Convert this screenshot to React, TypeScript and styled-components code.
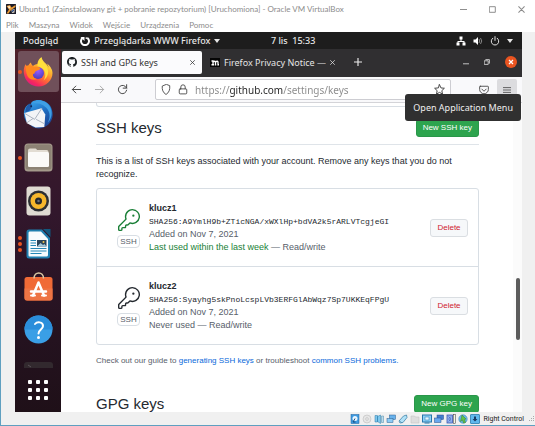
import React from "react";
import styled, { createGlobalStyle, css } from "styled-components";

const ui = '"Noto Sans", "Open Sans", sans-serif';
const host = 'Lato, "Open Sans", sans-serif';
const web = '"Liberation Sans", Arial, sans-serif';

const GlobalStyle = createGlobalStyle`
  *, *::before, *::after { box-sizing: border-box; }
  body { margin: 0; background: #f0f0f0; }
  button, input { font: inherit; color: inherit; margin: 0; padding: 0; border: 0; background: none; }
  svg { display: block; flex: none; }
`;

const HostWindow = styled.div`
  display: flex;
  flex-direction: column;
  height: 100vh;
  overflow: hidden;
  background: #f0f0f0;
  border-left: 1px solid #5f9fc0;
  border-bottom: 1px solid #5f9fc0;
  font-family: ${host};
`;

const TitleBar = styled.header`
  display: flex;
  align-items: center;
  gap: 3px;
  height: 18px;
  padding: 0 10px 0 5px;
  background: #fff;
  color: #8c8c8c;
  font-size: 8px;
`;

const WindowTitle = styled.h1`
  flex: 1;
  margin: 0;
  font-size: 8px;
  font-weight: 400;
  white-space: nowrap;
`;

const HostControls = styled.div`
  display: flex;
  gap: 22px;
`;

const IconButton = styled.button`
  display: flex;
  align-items: center;
  justify-content: center;
`;

const MenuBar = styled.nav`
  display: flex;
  align-items: center;
  gap: 10px;
  height: 14px;
  padding: 0 5px;
  background: #fff;
  color: #8c8c8c;
  font-size: 8px;
`;

const Guest = styled.main`
  flex: 1;
  min-height: 0;
  display: flex;
  flex-direction: column;
  margin: 0 13px 0 14px;
  background: #1d1d1d;
  font-family: ${ui};
`;

const TopPanel = styled.div`
  display: grid;
  grid-template-columns: 6fr auto 5fr;
  align-items: center;
  height: 17px;
  flex: none;
  padding-left: 8px;
  color: #e6e6e6;
  font-size: 9px;
  font-weight: 500;
  white-space: nowrap;
`;

const PanelLeft = styled.div`
  display: flex;
  align-items: center;
  gap: 22px;
`;

const AppMenu = styled.button`
  display: flex;
  align-items: center;
  gap: 4px;
`;

const PanelTray = styled.div`
  display: flex;
  align-items: center;
  justify-content: flex-end;
  gap: 7px;
  padding-right: 9px;
`;

const Desktop = styled.div`
  flex: 1;
  min-height: 0;
  display: flex;
`;

const Dock = styled.nav`
  display: flex;
  flex-direction: column;
  align-items: center;
  width: 46px;
  flex: none;
  padding-top: 2px;
  overflow: hidden;
  background: linear-gradient(#4e2029, #3a1a2c 22%, #32172c 45%, #24121f 80%, #1f1018);
`;

const DockItem = styled.button<{ $active?: boolean }>`
  position: relative;
  display: flex;
  align-items: center;
  justify-content: center;
  width: 41px;
  height: 41px;
  flex: none;
  margin-bottom: 2px;
  border-radius: 3px;
  ${(p) => p.$active && css`background: #70505a;`}
`;

const RunningDots = styled.span`
  position: absolute;
  left: 0;
  display: flex;
  flex-direction: column;
  gap: 2px;
`;

const Dot = styled.i`
  width: 4px;
  height: 4px;
  border-radius: 50%;
  background: #e95420;
`;

const TerminalEdge = styled.button`
  display: flex;
  height: 6px;
  flex: none;
  margin-top: 10px;
`;

const AppsButton = styled.button`
  display: flex;
  margin-top: 12px;
`;

const Browser = styled.section`
  position: relative;
  flex: 1;
  min-width: 0;
  display: flex;
  flex-direction: column;
  background: #fff;
`;

const TabStrip = styled.div`
  display: flex;
  align-items: center;
  height: 28px;
  flex: none;
  padding: 0 5px 2px 1px;
  background: #302f31;
`;

const Tab = styled.div<{ $active?: boolean }>`
  display: flex;
  align-items: center;
  gap: 4px;
  width: 140px;
  height: 23px;
  padding: 0 7px 0 5px;
  border-radius: 2px;
  background: ${(p) => (p.$active ? "#fbfbfd" : "transparent")};
  color: ${(p) => (p.$active ? "#333" : "#e4e4e4")};
  font-size: 9px;
  white-space: nowrap;
  & + & { padding-left: 8px; }
`;

const TabLabel = styled.button`
  flex: 1;
  min-width: 0;
  overflow: hidden;
  text-align: left;
`;

const NewTab = styled(IconButton)`
  margin: 0 auto 0 12px;
`;

const BrowserControls = styled.div`
  display: flex;
  align-items: center;
  gap: 15px;
`;

const Toolbar = styled.div`
  display: flex;
  align-items: center;
  height: 26px;
  flex: none;
  padding: 0 5px 0 10px;
  background: #f9f9fb;
  border-bottom: 1px solid #d4d4d8;
  color: #444;
`;

const NavButtons = styled.div`
  display: flex;
  align-items: center;
  gap: 12px;
  margin-right: 27px;
`;

const AddressBar = styled.label`
  flex: 1;
  min-width: 0;
  display: flex;
  align-items: center;
  gap: 7px;
  height: 21px;
  padding: 0 5px;
  border: 1px solid #cdcdd2;
  border-radius: 2px;
  background: #fff;
`;

const AddressInput = styled.input`
  flex: 1;
  min-width: 0;
  font-size: 10px;
  outline: none;
  background: linear-gradient(90deg, #888 34px, #222 34px, #222 88px, #888 88px);
  -webkit-background-clip: text;
  background-clip: text;
  color: transparent;
`;

const ToolbarEnd = styled.div`
  display: flex;
  align-items: center;
  gap: 8px;
  margin-left: 28px;
`;

const MenuButton = styled(IconButton)`
  width: 20px;
  height: 21px;
  border-radius: 2px;
  background: #dcdcdf;
`;

const Tooltip = styled.div`
  position: absolute;
  top: 45px;
  right: 1px;
  padding: 6px 8px;
  border-radius: 3px;
  background: #303030;
  color: #eee;
  font-size: 9px;
  line-height: 15px;
  white-space: nowrap;
`;

const Viewport = styled.div`
  flex: 1;
  min-height: 0;
  display: flex;
  overflow: hidden;
  font-family: ${web};
  color: #24292f;
`;

const Page = styled.div`
  flex: 1;
  min-width: 0;
  padding: 0 34px 0 35px;
`;

const ScrollTrack = styled.div`
  width: 9px;
  flex: none;
  padding: 175px 2px 0 3px;
  background: #fbfbfb;
`;

const ScrollThumb = styled.div`
  height: 62px;
  border-radius: 2px;
  background: #5c5c5c;
`;

const PreviousPanel = styled.div`
  height: 4px;
  border: 1px solid #d8dee4;
  border-top: 0;
  border-radius: 0 0 3px 3px;
`;

const SectionHead = styled.div<{ $top: number }>`
  display: flex;
  align-items: center;
  justify-content: space-between;
  margin-top: ${(p) => p.$top}px;
  padding-bottom: 7px;
  border-bottom: 1px solid #dfe4e9;
`;

const SectionTitle = styled.h2`
  margin: 0;
  font-size: 15px;
  line-height: 18px;
  font-weight: 400;
`;

const PrimaryButton = styled.button`
  height: 18px;
  padding: 0 6px;
  border: 1px solid #2a964a;
  border-radius: 3px;
  background: #2da44e;
  color: #fff;
  font-size: 8px;
  line-height: 14px;
  white-space: nowrap;
`;

const Intro = styled.p`
  margin: 10px 0 7px;
  font-size: 9px;
  line-height: 13px;
`;

const KeyList = styled.ul`
  list-style: none;
  margin: 0;
  padding: 0;
  border: 1px solid #d8dee4;
  border-radius: 3px;
`;

const KeyRow = styled.li`
  display: flex;
  align-items: center;
  gap: 9px;
  padding: 13px 10px 12px 20px;
  & + & { border-top: 1px solid #d8dee4; }
`;

const KeyMark = styled.div<{ $recent: boolean }>`
  display: flex;
  flex-direction: column;
  align-items: center;
  gap: 4px;
  width: 23px;
  color: ${(p) => (p.$recent ? "#1a7f37" : "#24292f")};
`;

const Badge = styled.span`
  width: 100%;
  border: 1px solid #d8dee4;
  border-radius: 4px;
  color: #57606a;
  font-size: 8px;
  line-height: 11px;
  text-align: center;
`;

const KeyInfo = styled.div`
  flex: 1;
  min-width: 0;
  color: #57606a;
  font-size: 9px;
  line-height: 13px;
  white-space: nowrap;
`;

const KeyName = styled.strong`
  display: block;
  color: #24292f;
`;

const Fingerprint = styled.code`
  display: block;
  color: #24292f;
  font-family: "Liberation Mono", monospace;
  font-size: 8px;
`;

const Recent = styled.span`
  color: #1a7f37;
`;

const DeleteButton = styled.button`
  width: 38px;
  height: 18px;
  border: 1px solid #dadee2;
  border-radius: 3px;
  background: #f6f8fa;
  color: #cf222e;
  font-size: 8px;
  line-height: 14px;
`;

const Help = styled.p`
  margin: 10px 0 0;
  color: #57606a;
  font-size: 8px;
  line-height: 12px;
`;

const Link = styled.a`
  color: #0969da;
  text-decoration: none;
`;

const StatusBar = styled.footer`
  display: flex;
  align-items: center;
  justify-content: flex-end;
  gap: 2px;
  height: 13px;
  flex: none;
  color: #222;
  font-family: Roboto, sans-serif;
  font-size: 7px;
  white-space: nowrap;
`;

const StatusLabel = styled.span`
  margin: 0 3px 0 1px;
`;

const Line = ({ w = 10, h = w, box = "0 0 16 16", sw = 1.4, children }: any) => (
  <svg width={w} height={h} viewBox={box} fill="none" stroke="currentColor" strokeWidth={sw} strokeLinecap="round" strokeLinejoin="round" aria-hidden="true">
    {children}
  </svg>
);

const VBoxIcon = () => (
  <svg width="10" height="10" viewBox="0 0 20 20" aria-hidden="true">
    <rect width="20" height="20" rx="1" fill="#1c1d2b" />
    <path d="M1 4 8 2l3 5 8-5v4L9 13l-4 6H1l5-8z" fill="#e99a35" />
    <path d="M3 5l4-1 2 4-3 1zM11 12l6-2v7l-5 1z" fill="#f7ead1" />
    <path d="M12 13l4-2v3l-4 3z" fill="#2a4a86" />
  </svg>
);

const FirefoxIcon = () => (
  <svg width="30" height="30" viewBox="0 0 60 60" aria-hidden="true">
    <defs>
      <linearGradient id="ff" x1="0.8" y1="0.05" x2="0.25" y2="1">
        <stop offset="0" stopColor="#fff44f" />
        <stop offset="0.35" stopColor="#ffb02e" />
        <stop offset="0.6" stopColor="#ff6a35" />
        <stop offset="0.85" stopColor="#f5265f" />
        <stop offset="1" stopColor="#d91a8a" />
      </linearGradient>
      <radialGradient id="ffg" cx="0.5" cy="0.3" r="0.8">
        <stop offset="0" stopColor="#9b5cff" />
        <stop offset="1" stopColor="#3f3bb5" />
      </radialGradient>
    </defs>
    <path d="M57 24c-2-5-6-9-9-11 2 4 3 6 3 8C48 13 38 9 37 0c-6 4-8 10-8 14-4 0-7 2-9 4-1-1-4-3-4-7-3 2-5 5-6 8-3-1-5-3-5-5-4 8-4 15-3 20 2 14 14 25 29 25s28-12 28-27c0-3-1-6-2-8z" fill="url(#ff)" />
    <circle cx="30" cy="32" r="12" fill="url(#ffg)" />
    <path d="M6 18c6-3 12-1 16 2 4-1 8-1 11 1 2 2 1 4-1 5-3 1-6 1-8 4-1 2-1 4-4 4-1 5 3 10 9 10-9 4-17 0-20-6-3-7-4-14-3-20z" fill="#ff8a1f" />
    <path d="M37 2c1 9 10 13 12 21 3 9 0 18-8 24 4-6 5-13 2-19-2-5-8-8-14-10 0-6 2-12 8-16z" fill="#ffdf3c" />
  </svg>
);

const ThunderbirdIcon = () => (
  <svg width="31" height="31" viewBox="0 0 64 64" aria-hidden="true">
    <defs>
      <linearGradient id="tb" x1="0.3" y1="0" x2="0.8" y2="1">
        <stop offset="0" stopColor="#3aa6ee" />
        <stop offset="0.5" stopColor="#1c69bd" />
        <stop offset="1" stopColor="#1d3f8f" />
      </linearGradient>
    </defs>
    <path d="M18 6C30-2 48 2 56 14c8 13 7 30-4 39-9 8-22 10-32 5L6 46C1 36 0 25 6 16l4-4 4 3z" fill="url(#tb)" />
    <path d="M20 8c10 0 20 1 28 10 8 8 9 20 3 31 9-9 11-23 4-34C48 4 32-1 20 8z" fill="#3f9fe4" />
    <path d="M3 29 38 19l8 13-2 26-18 1-18-9z" fill="#f2f4f7" />
    <path d="m4 30 20 12 15-23M8 49l13-9M44 51l-17-9" fill="none" stroke="#a9b3c0" strokeWidth="2" />
    <path d="M12 10c-5 5-8 11-7 18l8-4c5-4 6-10 4-14z" fill="#1f5ba8" />
    <circle cx="17" cy="15" r="2" fill="#0d2856" />
  </svg>
);

const FilesIcon = () => (
  <svg width="29" height="29" viewBox="0 0 58 58" aria-hidden="true">
    <rect x="1" y="1" width="56" height="56" rx="7" fill="#a49a8b" />
    <rect x="3" y="3" width="52" height="50" rx="5" fill="#8c8274" />
    <path d="M8 15q0-4 4-4h11q2 0 3 3h19q4 0 4 4v26q0 4-4 4H12q-4 0-4-4z" fill="#e2dcd2" />
    <rect x="8" y="18" width="42" height="30" rx="3" fill="#fbfaf8" />
  </svg>
);

const MusicIcon = () => (
  <svg width="25" height="30" viewBox="0 0 50 60" aria-hidden="true">
    <rect x="1" y="1" width="48" height="58" rx="6" fill="#dfdbd2" />
    <circle cx="25" cy="30" r="21" fill="#2c2f33" />
    <circle cx="25" cy="30" r="16" fill="#f6b72c" />
    <circle cx="25" cy="30" r="7" fill="#25282b" />
    <circle cx="25" cy="30" r="2.5" fill="#697078" />
  </svg>
);

const WriterIcon = () => (
  <svg width="25" height="30" viewBox="0 0 50 60" aria-hidden="true">
    <path d="M6 1h26l16 17v36q0 5-5 5H6q-5 0-5-5V6q0-5 5-5z" fill="#1f7eae" />
    <path d="M34 0h15v16z" fill="#13577d" />
    <path d="M7 5h23l14 15v32q0 3-3 3H7q-2 0-2-3V8q0-3 2-3z" fill="#f7fbfd" />
    <path d="M9 23h11M9 28h11M9 33h11M9 39h32M9 44h32M9 49h22" stroke="#2587b5" strokeWidth="2.4" />
    <rect x="22" y="22" width="19" height="13" fill="#2a4459" />
    <path d="m22 35 7-7 5 4 3-2 4 5z" fill="#9fc7da" />
    <circle cx="35" cy="26" r="2" fill="#f3c64b" />
  </svg>
);

const SoftwareIcon = () => (
  <svg width="29" height="29" viewBox="0 0 58 58" aria-hidden="true">
    <rect x="1" y="10" width="56" height="47" rx="5" fill="#f06a36" />
    <path d="M1 33h56v19q0 5-5 5H6q-5 0-5-5z" fill="#ee7444" />
    <path d="M20 13c0-15 19-15 19 0" fill="none" stroke="#d8c7a3" strokeWidth="3" />
    <path d="m18 47 11-26 11 26M14 39h30" fill="none" stroke="#fff" strokeWidth="5" strokeLinecap="round" strokeLinejoin="round" />
    <path d="M14 47h8M36 47h8" fill="none" stroke="#fff" strokeWidth="4" strokeLinecap="round" />
  </svg>
);

const HelpIcon = () => (
  <svg width="29" height="29" viewBox="0 0 58 58" aria-hidden="true">
    <circle cx="29" cy="29" r="28" fill="#3a9fe6" />
    <path d="M1 29a28 28 0 0 1 56 0z" fill="#2b8edb" />
    <path d="M22 18c4-5 16-5 16 4 0 7-9 7-9 15" fill="none" stroke="#fff" strokeWidth="4" strokeLinecap="round" />
    <circle cx="29" cy="45" r="3" fill="#fff" />
  </svg>
);

const KeyIcon = () => (
  <svg width="22" height="22" viewBox="0 0 24 24" fill="currentColor" aria-hidden="true">
    <path d="M16.75 8.5a1.25 1.25 0 1 0 0-2.5 1.25 1.25 0 0 0 0 2.5Z" />
    <path d="M15.75 0a8.25 8.25 0 0 0-7.851 10.79L.513 18.178A1.75 1.75 0 0 0 0 19.414v2.836C0 23.217.784 24 1.75 24h1.5A1.75 1.75 0 0 0 5 22.25v-1a.25.25 0 0 1 .25-.25h2.735a.75.75 0 0 0 .545-.22l.214-.213A.875.875 0 0 0 9 19.948V18.5a.25.25 0 0 1 .25-.25h1.086c.464 0 .91-.184 1.237-.513l1.636-1.636A8.25 8.25 0 1 0 15.75 0ZM9 8.25a6.75 6.75 0 1 1 4.288 6.287.75.75 0 0 0-.804.168l-1.971 1.972a.25.25 0 0 1-.177.073H9.25A1.75 1.75 0 0 0 7.5 18.5v1H5.25a1.75 1.75 0 0 0-1.75 1.75v1a.25.25 0 0 1-.25.25h-1.5a.25.25 0 0 1-.25-.25v-2.836a.25.25 0 0 1 .073-.177l7.722-7.721a.75.75 0 0 0 .168-.804A6.73 6.73 0 0 1 9 8.25Z" />
  </svg>
);

const GithubIcon = () => (
  <svg width="10" height="10" viewBox="0 0 16 16" fill="#1b1f23" aria-hidden="true">
    <path d="M8 0C3.58 0 0 3.58 0 8c0 3.54 2.29 6.53 5.47 7.59.4.07.55-.17.55-.38 0-.19-.01-.82-.01-1.49-2.01.37-2.53-.49-2.69-.94-.09-.23-.48-.94-.82-1.13-.28-.15-.68-.52-.01-.53.63-.01 1.08.58 1.23.82.72 1.21 1.87.87 2.33.66.07-.52.28-.87.51-1.07-1.78-.2-3.64-.89-3.64-3.95 0-.87.31-1.59.82-2.15-.08-.2-.36-1.02.08-2.12 0 0 .67-.21 2.2.82.64-.18 1.32-.27 2-.27s1.36.09 2 .27c1.53-1.04 2.2-.82 2.2-.82.44 1.1.16 1.92.08 2.12.51.56.82 1.27.82 2.15 0 3.07-1.87 3.75-3.65 3.95.29.25.54.73.54 1.48 0 1.07-.01 1.93-.01 2.2 0 .21.15.46.55.38A8.01 8.01 0 0 0 16 8c0-4.42-3.58-8-8-8z" />
  </svg>
);

const MozillaIcon = () => (
  <svg width="10" height="9" viewBox="0 0 20 18" aria-hidden="true">
    <rect width="20" height="18" fill="#050505" />
    <path d="M3 6h3v7M3 13.500h5M6 8q4-3 5 0v5M9.500 13.500h3M11 8q4-3 5 0v5.500h2" fill="none" stroke="#fff" strokeWidth="2.600" />
  </svg>
);

const Caret = () => (
  <svg width="6" height="4" viewBox="0 0 6 4" fill="currentColor" aria-hidden="true"><path d="M0 0h6L3 4z" /></svg>
);

const Cross = ({ size = 6 }: { size?: number }) => (
  <Line w={size} box="0 0 10 10" sw={1.5}><path d="m1 1 8 8M9 1 1 9" /></Line>
);

const statusIcons: { name: string; art: React.ReactNode }[] = [
  { name: "Hard disk", art: <><rect x="2" y="1" width="16" height="18" fill="#3f9be0" stroke="#1b5f9f" /><circle cx="10" cy="9" r="5" fill="#e8f5ff" /><path d="m10 9-4 7h5" fill="none" stroke="#174b7c" strokeWidth="2" /></> },
  { name: "Optical disc", art: <><circle cx="10" cy="10" r="8" fill="#e6e6e6" stroke="#b5b5b5" /><circle cx="10" cy="10" r="2.5" fill="#fff" stroke="#999" /></> },
  { name: "Audio", art: <><path d="M2 3h5v13H2zM7 5l6-3v17l-6-4z" fill="#7fc8ee" stroke="#2a7ba8" /><path d="M15 4h4v13h-4z" fill="#b6dcef" stroke="#4e88a6" /></> },
  { name: "Network", art: <><rect x="7" y="2" width="12" height="9" fill="#68b2ec" stroke="#295d8e" /><rect x="2" y="9" width="12" height="8" fill="#8ccbf5" stroke="#295d8e" /></> },
  { name: "USB", art: <><path d="m2 14 9-10 6-2 1 5-8 10-6 1z" fill="#b1e2f8" stroke="#397fa5" strokeWidth="1.500" /><path d="m3 13 5 5" stroke="#397fa5" /></> },
  { name: "Shared folders", art: <path d="M2 4h7l2 2h7v12H2z" fill="#dedede" stroke="#bdbdbd" /> },
  { name: "Display", art: <><rect x="1" y="2" width="18" height="14" fill="#8ed2f8" stroke="#2776aa" strokeWidth="2" /><rect x="6" y="6" width="8" height="6" fill="#e3f6ff" stroke="#2776aa" /><path d="M5 18h10" stroke="#2776aa" strokeWidth="2" /></> },
  { name: "Recording", art: <><rect x="6" y="2" width="13" height="9" fill="#447ed0" stroke="#244d8a" /><rect x="1" y="8" width="13" height="9" fill="#69a8ee" stroke="#244d8a" /></> },
  { name: "Processor", art: <><rect x="2" y="2" width="11" height="16" fill="#91b3ef" stroke="#344eac" strokeWidth="1.500" /><path d="m5 5 5 5-5 5m5-10-5 5 5 5" fill="none" stroke="#344eac" /><rect x="15" y="1" width="4" height="18" fill="#f5f5e6" stroke="#333" /></> },
  { name: "Mouse integration", art: <><circle cx="10" cy="10" r="8.500" fill="#69b9e8" stroke="#3481ae" /><path d="m8 2 8 8-3 1 2 6-4 1-2-6-4 3z" fill="#62c248" stroke="#397f2a" /></> },
  { name: "Keyboard capture", art: <><rect x="1" y="1" width="18" height="18" rx="1" fill="#5fb8ee" stroke="#2477a9" strokeWidth="1.500" /><path d="M8 5h4v5h3l-5 5-5-5h3z" fill="#183b63" /></> },
];

const keys = [
  { name: "klucz1", hash: "SHA256:A9YmlH9b+ZTicNGA/xWXlHp+bdVA2k5rARLVTcgjeGI", used: "Last used within the last week", recent: true },
  { name: "klucz2", hash: "SHA256:Syayhg5skPnoLcspLVb3ERFGlAbWqz7Sp7UKKEqFPgU", used: "Never used", recent: false },
];

const dockApps = [
  { name: "Firefox", icon: <FirefoxIcon />, dots: 1, active: true },
  { name: "Thunderbird", icon: <ThunderbirdIcon />, dots: 0 },
  { name: "Files", icon: <FilesIcon />, dots: 1 },
  { name: "Rhythmbox", icon: <MusicIcon />, dots: 0 },
  { name: "LibreOffice Writer", icon: <WriterIcon />, dots: 3 },
  { name: "Ubuntu Software", icon: <SoftwareIcon />, dots: 0 },
  { name: "Help", icon: <HelpIcon />, dots: 0 },
];

export default function App() {
  return (
    <>
      <GlobalStyle />
      <HostWindow>
        <TitleBar>
          <VBoxIcon />
          <WindowTitle>Ubuntu1 (Zainstalowany git + pobranie repozytorium) [Uruchomiona] - Oracle VM VirtualBox</WindowTitle>
          <HostControls>
            <IconButton aria-label="Minimize"><Line w={7} box="0 0 10 10"><path d="M0 5h10" /></Line></IconButton>
            <IconButton aria-label="Maximize"><Line w={7} box="0 0 10 10"><path d="M1 1h8v8H1z" /></Line></IconButton>
            <IconButton aria-label="Close"><Cross size={7} /></IconButton>
          </HostControls>
        </TitleBar>
        <MenuBar>
          {["Plik", "Maszyna", "Widok", "Wejście", "Urządzenia", "Pomoc"].map((m) => <button key={m}>{m}</button>)}
        </MenuBar>

        <Guest>
          <TopPanel>
            <PanelLeft>
              <button>Podgląd</button>
              <AppMenu>
                <svg width="10" height="10" viewBox="0 0 20 20" aria-hidden="true">
                  <path d="M5 4a8 8 0 1 0 10 0" fill="none" stroke="#fff" strokeWidth="4" />
                  <path d="M1 2h8v8zM10 4l5-2v5z" fill="#fff" />
                </svg>
                Przeglądarka WWW Firefox
                <Caret />
              </AppMenu>
            </PanelLeft>
            <button>7 lis&nbsp; 15:33</button>
            <PanelTray>
              <svg width="10" height="10" viewBox="0 0 20 20" fill="#fff" aria-hidden="true"><path d="M7 1h6v6h-2v3h6v3h2v6h-6v-6h2v-1H5v1h2v6H1v-6h2v-3h6V7H7z" /></svg>
              <svg width="10" height="10" viewBox="0 0 20 20" aria-hidden="true"><path d="M1 7h4l5-5v16l-5-5H1z" fill="#fff" /><path d="M12 6q3 4 0 8M15 4q5 6 0 12" fill="none" stroke="#aaa" strokeWidth="1.500" /></svg>
              <Line w={10} sw={1.6}><path d="M4.500 3.500a6 6 0 1 0 7 0M8 1v6" /></Line>
              <Caret />
            </PanelTray>
          </TopPanel>

          <Desktop>
            <Dock aria-label="Dock">
              {dockApps.map((a) => (
                <DockItem key={a.name} aria-label={a.name} $active={a.active}>
                  <RunningDots>{Array.from({ length: a.dots }, (_, i) => <Dot key={i} />)}</RunningDots>
                  {a.icon}
                </DockItem>
              ))}
              <TerminalEdge aria-label="Terminal">
                <svg width="29" height="6" viewBox="0 0 29 6" aria-hidden="true">
                  <path d="M0 6V3q0-3 3-3h23q3 0 3 3v3z" fill="#32292e" /><path d="m4 3 3 2" stroke="#5a5257" />
                </svg>
              </TerminalEdge>
              <AppsButton aria-label="Show applications">
                <svg width="20" height="20" viewBox="0 0 20 20" fill="#fff" aria-hidden="true">
                  {[0, 8, 16].map((y) => [0, 8, 16].map((x) => <rect key={`${x}-${y}`} x={x} y={y} width="4" height="4" rx="1" />))}
                </svg>
              </AppsButton>
            </Dock>

            <Browser>
              <TabStrip>
                <Tab $active>
                  <GithubIcon />
                  <TabLabel>SSH and GPG keys</TabLabel>
                  <IconButton aria-label="Close tab"><Cross size={5} /></IconButton>
                </Tab>
                <Tab>
                  <MozillaIcon />
                  <TabLabel>Firefox Privacy Notice —</TabLabel>
                  <IconButton aria-label="Close tab"><Cross size={5} /></IconButton>
                </Tab>
                <NewTab aria-label="New tab"><Line w={8} box="0 0 10 10"><path stroke="#eee" d="M5 0v10M0 5h10" /></Line></NewTab>
                <BrowserControls>
                  <IconButton aria-label="Minimize"><Line w={6} box="0 0 10 10"><path stroke="#ddd" d="M0 8h10" /></Line></IconButton>
                  <IconButton aria-label="Restore"><Line w={6} box="0 0 10 10"><path stroke="#ddd" d="M1 3h6v6H1zM3 1h6v6" /></Line></IconButton>
                  <IconButton aria-label="Close">
                    <svg width="12" height="12" viewBox="0 0 12 12" aria-hidden="true"><circle cx="6" cy="6" r="6" fill="#e95420" /><path d="m4 4 4 4M8 4 4 8" stroke="#fff" strokeWidth="1.200" /></svg>
                  </IconButton>
                </BrowserControls>
              </TabStrip>
              <Toolbar>
                <NavButtons>
                  <IconButton aria-label="Back"><Line w={11}><path d="M14 8H2M7 3 2 8l5 5" /></Line></IconButton>
                  <IconButton aria-label="Forward"><Line w={11}><path stroke="#aaa" d="M2 8h12M9 3l5 5-5 5" /></Line></IconButton>
                  <IconButton aria-label="Reload"><Line w={11}><path d="M14 9a6 6 0 1 1-2-5.500L14 6M14 1v5H9" /></Line></IconButton>
                </NavButtons>
                <AddressBar>
                  <Line w={10} h={11}><path d="M8 0 2 2.500C1.500 8 3 13 8 16c5-3 6.500-8 6-13.500z" /></Line>
                  <Line w={10} h={11}><rect x="2" y="7" width="12" height="8" rx="1.500" /><path d="M4.500 7V4a3.500 3.500 0 0 1 7 0v3" /></Line>
                  <AddressInput aria-label="Address" type="text" defaultValue="https://github.com/settings/keys" />
                  <IconButton aria-label="Bookmark"><Line w={11}><path d="m8 1 2.100 4.700 5 .5-3.700 3.500 1 5L8 12.200l-4.400 2.500 1-5L.9 6.200l5-.5z" /></Line></IconButton>
                </AddressBar>
                <ToolbarEnd>
                  <IconButton aria-label="Pocket"><Line w={10}><path d="M2 2h12q1 0 1 1v4a7 7 0 0 1-14 0V3q0-1 1-1zM4.500 6.500 8 10l3.500-3.500" /></Line></IconButton>
                  <MenuButton aria-label="Open Application Menu"><Line w={8} box="0 0 10 10" sw={1}><path d="M0 2h10M0 5h10M0 8h10" /></Line></MenuButton>
                </ToolbarEnd>
              </Toolbar>

              <Viewport>
                <Page>
                  <PreviousPanel />
                  <SectionHead $top={12}>
                    <SectionTitle>SSH keys</SectionTitle>
                    <PrimaryButton>New SSH key</PrimaryButton>
                  </SectionHead>
                  <Intro>This is a list of SSH keys associated with your account. Remove any keys that you do not recognize.</Intro>
                  <KeyList>
                    {keys.map((k) => (
                      <KeyRow key={k.name}>
                        <KeyMark $recent={k.recent}><KeyIcon /><Badge>SSH</Badge></KeyMark>
                        <KeyInfo>
                          <KeyName>{k.name}</KeyName>
                          <Fingerprint>{k.hash}</Fingerprint>
                          <div>Added on Nov 7, 2021</div>
                          <div>{k.recent ? <Recent>{k.used}</Recent> : k.used} — Read/write</div>
                        </KeyInfo>
                        <DeleteButton>Delete</DeleteButton>
                      </KeyRow>
                    ))}
                  </KeyList>
                  <Help>
                    Check out our guide to <Link href="#generating">generating SSH keys</Link> or troubleshoot <Link href="#problems">common SSH problems.</Link>
                  </Help>
                  <SectionHead $top={28}>
                    <SectionTitle>GPG keys</SectionTitle>
                    <PrimaryButton>New GPG key</PrimaryButton>
                  </SectionHead>
                </Page>
                <ScrollTrack><ScrollThumb /></ScrollTrack>
              </Viewport>
              <Tooltip role="tooltip">Open Application Menu</Tooltip>
            </Browser>
          </Desktop>
        </Guest>

        <StatusBar>
          {statusIcons.map((s) => (
            <svg key={s.name} width="10" height="10" viewBox="0 0 20 20" role="img" aria-label={s.name}>{s.art}</svg>
          ))}
          <StatusLabel>Right Control</StatusLabel>
          <svg width="6" height="6" viewBox="0 0 6 6" fill="#aaa" aria-hidden="true"><path d="M4 0h1v1H4zM2 2h1v1H2zM4 2h1v1H4zM0 4h1v1H0zM2 4h1v1H2zM4 4h1v1H4z" /></svg>
        </StatusBar>
      </HostWindow>
    </>
  );
}
